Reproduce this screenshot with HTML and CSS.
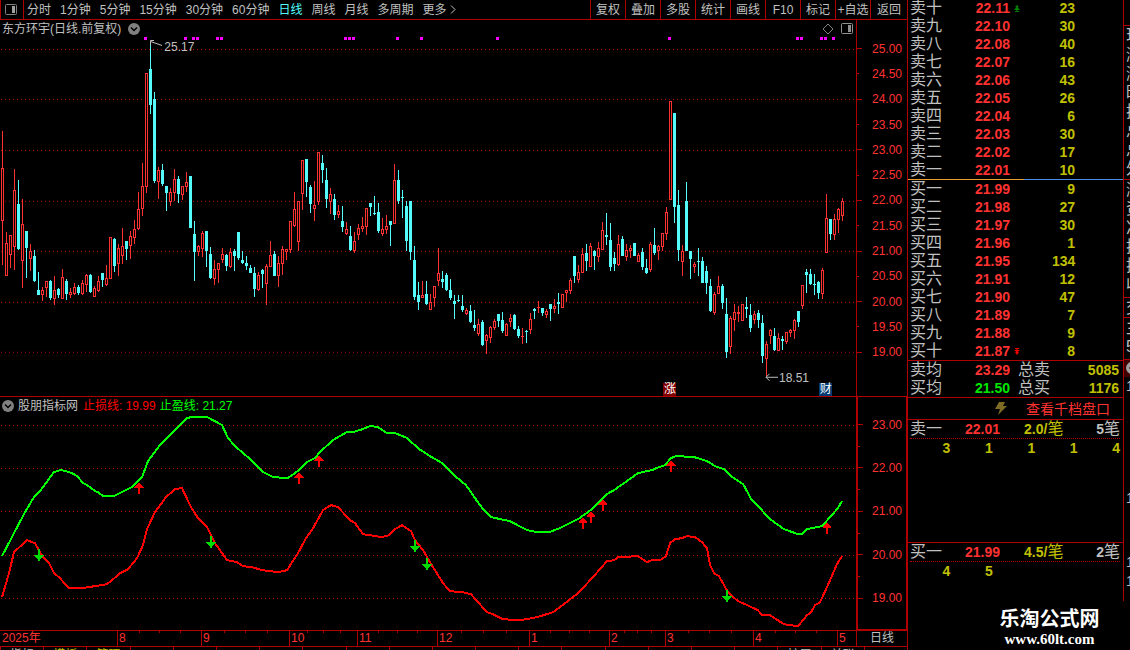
FILE: index.html
```
<!DOCTYPE html>
<html lang="zh-CN">
<head>
	<meta charset="utf-8">
	<title>东方环宇 日线</title>
	<link rel="stylesheet" href="styles.css">
</head>
<body>
	<main class="charts">
		<nav class="toolbar">
			<button class="tool-icon" aria-label="侧栏">
				<svg width="12" height="11" viewBox="0 0 12 11"><rect x=".5" y=".5" width="11" height="10" rx="1" fill="none" stroke="#808080"/><rect x="7" y="2" width="3" height="7" fill="#a0a0a0"/></svg>
			</button>
			<div class="periods">
				<button>分时</button>
				<button>1分钟</button>
				<button>5分钟</button>
				<button>15分钟</button>
				<button>30分钟</button>
				<button>60分钟</button>
				<button class="active">日线</button>
				<button>周线</button>
				<button>月线</button>
				<button>多周期</button>
				<button>更多 <svg width="6" height="9" viewBox="0 0 6 9"><path d="M1 0.5 5 4.5 1 8.5" fill="none" stroke="#c0c0c0"/></svg></button>
			</div>
			<div class="tools">
				<button>复权</button>
				<button>叠加</button>
				<button>多股</button>
				<button>统计</button>
				<button>画线</button>
				<button>F10</button>
				<button>标记</button>
				<button>+自选</button>
				<button>返回</button>
			</div>
		</nav>

		<section class="panel kline">
			<div class="plot">
				<svg id="kline" class="drawing" viewBox="0 20 856 376" preserveAspectRatio="none"></svg>
				<header class="plot-title">
					<span class="stock">东方环宇(日线.前复权)</span>
					<svg width="12" height="12" viewBox="0 0 12 12"><circle cx="6" cy="6" r="6" fill="#808080"/><path d="M3 4.5 6 7.5 9 4.5" fill="none" stroke="#000" stroke-width="1.5"/></svg>
					<span class="corner">
						<svg width="12" height="12" viewBox="0 0 12 12"><path d="M6 1 11 6 6 11 1 6Z" fill="none" stroke="#808080"/></svg>
						<svg width="12" height="11" viewBox="0 0 12 11"><rect x=".5" y=".5" width="11" height="10" rx="1" fill="none" stroke="#909090"/><rect x="7" y="2" width="3" height="7" fill="#909090"/></svg>
					</span>
				</header>
				<span class="note high">25.17</span>
				<span class="note low">18.51</span>
				<span class="flag rise">涨</span>
				<span class="flag report">财</span>
			</div>
			<ul class="scale">
				<li>25.00</li><li>24.50</li><li>24.00</li><li>23.50</li><li>23.00</li><li>22.50</li><li>22.00</li><li>21.50</li><li>21.00</li><li>20.50</li><li>20.00</li><li>19.50</li><li>19.00</li>
			</ul>
		</section>

		<section class="panel indicator">
			<div class="plot">
				<svg id="indicator" class="drawing" viewBox="0 397 856 233" preserveAspectRatio="none"></svg>
				<header class="plot-title">
					<svg width="12" height="12" viewBox="0 0 12 12"><circle cx="6" cy="6" r="6" fill="#808080"/><path d="M3 4.5 6 7.5 9 4.5" fill="none" stroke="#000" stroke-width="1.5"/></svg>
					<span>股朋指标网</span>
					<span class="stop">止损线: 19.99</span>
					<span class="profit">止盈线: 21.27</span>
				</header>
			</div>
			<ul class="scale">
				<li>23.00</li><li></li><li>22.00</li><li></li><li>21.00</li><li></li><li>20.00</li><li></li><li>19.00</li>
			</ul>
		</section>

		<div class="timeline">
			<ol class="months">
				<li>2025年</li><li>8</li><li>9</li><li>10</li><li>11</li><li>12</li><li>1</li><li>2</li><li>3</li><li>4</li><li>5</li>
			</ol>
			<span class="cycle">日线</span>
		</div>
		<nav class="tabs">
			<button>指标</button><button class="on">模板</button><button class="on">管理</button><button></button><button></button><button></button><button></button><button></button><button></button><button></button><button></button><button></button><button></button><button></button><button></button><button></button><button></button><button></button><button>扩展</button><button>关联</button><button></button>
		</nav>
	</main>

	<aside class="quote">
		<table class="book sells">
			<tr><th>卖十</th><td>22.11</td><td class="dir"><svg width="6" height="7" viewBox="0 0 6 7"><path d="M3 0 5 2H3.5L6 5H3.5V6H5V7H1V6H2.5V5H0L2.5 2H1Z" fill="#008000"/></svg></td><td>23</td></tr>
			<tr><th>卖九</th><td>22.10</td><td></td><td>30</td></tr>
			<tr><th>卖八</th><td>22.08</td><td></td><td>40</td></tr>
			<tr><th>卖七</th><td>22.07</td><td></td><td>16</td></tr>
			<tr><th>卖六</th><td>22.06</td><td></td><td>43</td></tr>
			<tr><th>卖五</th><td>22.05</td><td></td><td>26</td></tr>
			<tr><th>卖四</th><td>22.04</td><td></td><td>6</td></tr>
			<tr><th>卖三</th><td>22.03</td><td></td><td>30</td></tr>
			<tr><th>卖二</th><td>22.02</td><td></td><td>17</td></tr>
			<tr><th>卖一</th><td>22.01</td><td></td><td>10</td></tr>
		</table>
		<div class="ratio"></div>
		<table class="book">
			<tr><th>买一</th><td>21.99</td><td></td><td>9</td></tr>
			<tr><th>买二</th><td>21.98</td><td></td><td>27</td></tr>
			<tr><th>买三</th><td>21.97</td><td></td><td>30</td></tr>
			<tr><th>买四</th><td>21.96</td><td></td><td>1</td></tr>
			<tr><th>买五</th><td>21.95</td><td></td><td>134</td></tr>
			<tr><th>买六</th><td>21.91</td><td></td><td>12</td></tr>
			<tr><th>买七</th><td>21.90</td><td></td><td>47</td></tr>
			<tr><th>买八</th><td>21.89</td><td></td><td>7</td></tr>
			<tr><th>买九</th><td>21.88</td><td></td><td>9</td></tr>
			<tr><th>买十</th><td>21.87</td><td class="dir"><svg width="6" height="7" viewBox="0 0 6 7"><path d="M1 0H5V1H3.5V2H6L3.5 4H5L3 7 1 4H2.5L0 2H2.5V1H1Z" fill="#ff0000"/></svg></td><td>8</td></tr>
		</table>
		<table class="average">
			<tr><th>卖均</th><td>23.29</td><th>总卖</th><td>5085</td></tr>
			<tr><th>买均</th><td class="down">21.50</td><th>总买</th><td>1176</td></tr>
		</table>
		<a class="more" href="#">
			<svg width="12" height="13" viewBox="0 0 12 13"><path d="M4 0H10L8 4H12L3 13 5 7H0Z" fill="#7d6b24"/></svg>
			查看千档盘口
		</a>
		<section class="queue">
			<div class="queue-head"><span>卖一</span><b class="price">22.01</b><span class="each"><b>2.0/</b>笔</span><span class="count"><b>5</b>笔</span></div>
			<ul><li>3</li><li>1</li><li>1</li><li>1</li><li>4</li></ul>
		</section>
		<section class="queue">
			<div class="queue-head"><span>买一</span><b class="price">21.99</b><span class="each"><b>4.5/</b>笔</span><span class="count"><b>2</b>笔</span></div>
			<ul><li>4</li><li>5</li></ul>
		</section>
		<footer class="brand">
			<strong>乐淘公式网</strong>
			<span>www.60lt.com</span>
		</footer>
	</aside>

	<aside class="details">
		<div class="group blank"></div>
		<div class="group prices"><p>现</p><p>涨</p><p>涨</p><p>昨</p><p>换</p><p>总</p><p>总</p><p>外</p></div>
		<div class="group limits"><p>涨</p><p>资</p><p>净</p><p>换</p><p>换</p><p>收</p></div>
		<div class="group"><p>交</p></div>
		<div class="group money"><p>主</p><p>5</p></div>
		<div class="knob"><svg width="12" height="12" viewBox="0 0 12 12"><circle cx="6" cy="6" r="6" fill="#a0a0a0"/><path d="M7 3 4 6 7 9" fill="none" stroke="#400000" stroke-width="1.5"/></svg></div>
		<div class="ticks"><p>1</p><p>1</p><p>1</p><p>1</p></div>
	</aside>
	<script src="chart.js"></script>
</body>
</html>
```
FILE: styles.css
```
* {
	box-sizing: border-box;
}
body {
	margin: 0;
	display: flex;
	height: 100vh;
	min-height: 650px;
	overflow: hidden;
	background: #000;
	color: #c0c0c0;
	font: 12px/16px "Liberation Sans", "Noto Sans CJK SC", sans-serif;
}
ul, ol, p {
	margin: 0;
	padding: 0;
	list-style: none;
}
button {
	margin: 0;
	padding: 0;
	border: 0;
	background: none;
	color: inherit;
	font: inherit;
	white-space: nowrap;
}
svg {
	display: block;
}

/* left side */
.charts {
	flex: 1;
	min-width: 0;
	display: flex;
	flex-direction: column;
}
.toolbar {
	display: flex;
	height: 20px;
	border-bottom: 1px solid #b00000;
}
.tool-icon {
	width: 24px;
	padding-left: 4px;
	border: solid #b00000;
	border-width: 0 1px;
}
.periods {
	display: flex;
	gap: 9px;
	padding-left: 3px;
}
.periods svg {
	display: inline;
}
.periods .active {
	color: #54fcfc;
}
.tools {
	display: flex;
	margin-left: auto;
}
.tools button {
	width: 35px;
	border-left: 1px solid #b00000;
}
.tools button:last-child {
	width: 37px;
}

.panel {
	display: flex;
	min-height: 0;
}
.kline {
	flex: 377;
	border-bottom: 1px solid #b00000;
}
.indicator {
	flex: 234;
	border-bottom: 1px solid #b00000;
}
.plot {
	position: relative;
	flex: 1;
	min-width: 0;
}
.drawing {
	position: absolute;
	width: 100%;
	height: 100%;
	shape-rendering: crispEdges;
}
.plot-title {
	position: absolute;
	left: 2px;
	right: 3px;
	top: 0;
	display: flex;
	align-items: center;
	gap: 4px;
	height: 18px;
}
.stock {
	margin-right: 3px;
}
.corner {
	display: flex;
	gap: 7px;
	margin-left: auto;
}
.stop {
	color: #ff0000;
	margin-left: 1px;
}
.profit {
	color: #00ff00;
}
.note {
	position: absolute;
}
.high {
	left: 19.2%;
	top: 5%;
}
.low {
	left: 91%;
	top: 93.2%;
}
.flag {
	position: absolute;
	bottom: 0;
	width: 13px;
	height: 13px;
	color: #fff;
	line-height: 13px;
	text-align: center;
}
.rise {
	left: 77.5%;
	background: #800000;
}
.report {
	left: 95.7%;
	background: #003a70;
}

.scale {
	display: flex;
	flex-direction: column;
	width: 51px;
	border-left: 1px solid #b00000;
	color: #ff3232;
}
.scale li {
	flex: 1;
	display: flex;
	align-items: center;
	justify-content: space-between;
	padding-right: 5px;
}
.scale li::before {
	content: "";
	width: 5px;
	height: 1px;
	background: #b00000;
}
.scale li:nth-child(even)::before {
	width: 2px;
}
.kline .scale {
	padding: 16px 0 31px;
}
.indicator .scale {
	padding: 17px 0 20px;
	border: solid #b00000;
	border-width: 0 1px 1px 2px;
}
.indicator .scale li {
	padding-right: 4px;
}

.timeline {
	display: flex;
	height: 16px;
	border-bottom: 1px solid #b00000;
}
.months {
	flex: 1;
	display: grid;
	grid-template-columns: 117fr 84fr 88fr 68fr 80fr 92fr 80fr 56fr 88fr 84fr 19fr;
	color: #ff3232;
}
.months li {
	min-width: 0;
	padding-left: 1px;
	line-height: 15px;
	border-left: 1px solid #b00000;
	background: linear-gradient(#b00000, #b00000) 25% 0 / 1px 2px no-repeat,
		linear-gradient(#b00000, #b00000) 50% 0 / 1px 2px no-repeat,
		linear-gradient(#b00000, #b00000) 75% 0 / 1px 2px no-repeat;
}
.months li:first-child {
	border: 0;
	padding-left: 2px;
}
.months li:first-child, .months li:last-child {
	background: none;
}
.cycle {
	width: 51px;
	line-height: 15px;
	text-align: center;
	border-left: 1px solid #b00000;
}
.tabs {
	display: flex;
	height: 3px;
	overflow: hidden;
}
.tabs button {
	flex: 1;
	border-left: 1px solid #b00000;
	line-height: 16px;
	height: 16px;
}
.tabs .on {
	color: #c0c000;
}

/* order book */
.quote {
	display: flex;
	flex-direction: column;
	width: 216px;
	border-left: 1px solid #b00000;
	font-size: 16px;
	line-height: 18px;
}
table {
	width: 100%;
	table-layout: fixed;
	border-collapse: collapse;
}
tr {
	height: 18px;
}
th {
	padding: 0 0 0 2px;
	font-weight: normal;
	text-align: left;
}
td {
	padding: 0;
	color: #ff3232;
	font-size: 14px;
	font-weight: bold;
	text-align: right;
}
td:last-child, .queue li {
	color: #c0c000;
}
.book th {
	width: 60px;
}
.book td {
	width: 42px;
}
.book .dir {
	padding-left: 4px;
}
.book td:last-child {
	width: auto;
	padding-right: 48px;
}
.sells {
	margin-top: -1px;
}
.ratio {
	height: 1px;
	background: linear-gradient(90deg, #e8a030 54%, #4a90e8 54%);
}
.average {
	border: solid #b00000;
	border-width: 1px 0;
	border-collapse: separate;
	border-spacing: 0;
}
.average th:first-child {
	width: 60px;
}
.average td:nth-child(2) {
	width: 42px;
}
.average th:nth-child(3) {
	padding-left: 8px;
}
.average td:last-child {
	width: 50px;
	padding-right: 4px;
}
.average .down {
	color: #00e600;
}
.more {
	display: flex;
	align-items: center;
	justify-content: flex-end;
	gap: 19px;
	height: 22px;
	padding-right: 13px;
	border-bottom: 1px solid #b00000;
	color: #ff3232;
	font-size: 14px;
	text-decoration: none;
}
.queue {
	height: 123px;
	border-bottom: 1px solid #b00000;
}
.queue:last-of-type {
	height: 60px;
	border: 0;
}
.queue-head {
	display: flex;
	align-items: center;
	height: 19px;
	margin: 0 3px 0 2px;
	border-bottom: 1px dotted #b00000;
}
.queue b {
	font-size: 14px;
	font-weight: bold;
}
.price {
	margin-left: 23px;
	color: #ff3232;
}
.each {
	margin-left: 24px;
	color: #c0c000;
}
.count {
	margin-left: auto;
}
.queue ul {
	display: grid;
	grid-template-columns: repeat(5, 1fr);
	padding-right: 3px;
	font-size: 14px;
	font-weight: bold;
	text-align: right;
}
.brand {
	display: flex;
	flex-direction: column;
	align-items: center;
	margin-top: auto;
	padding: 0 0 2px 68px;
	color: #fff;
}
.brand strong {
	font-size: 20px;
	line-height: 22px;
}
.brand span {
	font: bold 15px/18px "Liberation Serif", serif;
}

/* cut off column at the right edge */
.details {
	width: 7px;
	height: 601px;
	overflow: hidden;
	padding: 0;
	border-left: 1px solid #b00000;
	font-size: 16px;
	line-height: 19px;
}
.details p {
	padding-left: 2px;
	height: 19px;
}
.group {
	border-bottom: 1px solid #b00000;
}
.blank {
	height: 26px;
}
.prices {
	height: 154px;
}
.limits {
	height: 118px;
}
.money {
	height: 42px;
}
.knob {
	height: 17px;
	padding: 2px 0 0 2px;
	background: #400000;
}
.ticks {
	font-size: 14px;
}
.ticks p:nth-child(2) {
	margin-top: 93px;
}
.ticks p:nth-child(3) {
	margin-top: 45px;
}
```
FILE: chart.js
```
var RED = "#ff3232";
var CYAN = "#54fcfc";

// one entry per day: colour, high, open/close top, open/close bottom, low
var days = `r131,168,221,265 r232,243,276,276 r235,235,255,268 r169,190,247,270 c180,204,249,250 r199,224,261,288 c231,231,248,278 r244,251,259,271 c250,256,281,282 c272,290,295,295
r287,290,295,301 r281,281,288,297 c280,281,298,300 r276,290,299,305 c288,289,295,298 r269,277,299,299 c279,281,294,300 r288,292,295,298 r283,287,294,295 c285,287,293,295
r280,283,294,295 r274,275,285,292 c274,275,292,293 r286,288,297,297 r276,281,291,292 c273,273,280,287 r265,278,285,286 r237,237,279,279 c238,239,266,272 r244,248,264,276
r228,246,256,264 c241,241,249,260 r231,236,246,259 r220,229,238,244 r192,209,229,230 r163,186,209,216 r73,73,187,193 c41,69,105,114 c92,99,181,183 r167,170,182,199
c164,170,184,186 c186,186,193,211 r188,192,202,206 r169,179,193,201 c176,179,194,203 r186,186,195,200 r172,182,187,192 c176,176,228,228 c221,234,252,281 r245,246,252,256
r231,233,249,257 c231,231,251,267 c247,254,278,279 r260,269,279,285 r263,263,270,283 r248,254,260,263 c254,255,266,271 r248,252,267,268 c249,251,256,271 c232,232,258,260
c251,260,263,264 c256,263,266,270 c265,268,273,273 c267,273,289,297 r272,275,290,291 c269,270,274,288 r264,266,284,305 r241,255,267,267 c251,254,276,276 r256,263,276,287
r246,249,264,275 r249,249,252,260 r221,221,250,253 r192,209,226,227 r201,201,242,251 r160,160,194,210 c159,159,182,197 c185,187,204,213 r181,205,209,221 r152,152,202,205
c155,163,170,183 c168,180,199,208 r188,194,202,214 c194,199,215,220 r205,211,215,218 c206,221,227,232 r222,229,234,235 c226,236,250,251 r232,241,251,253 r224,228,235,240
r217,226,229,232 r208,208,227,235 c203,203,207,216 c196,213,214,215 c203,212,231,233 r218,229,234,236 r215,226,230,234 c221,221,225,246 r164,180,224,224 c170,180,201,204
c190,197,198,218 c201,206,241,251 c201,201,252,260 c246,260,297,300 c282,295,302,310 r281,295,298,298 c281,294,304,305 r294,302,310,310 r286,286,298,307 r248,273,281,286
c271,279,282,288 c273,275,290,291 c279,290,298,300 c295,301,304,319 c295,300,301,302 c295,306,310,312 r308,310,314,315 c305,311,322,323 c310,325,328,331 r319,324,334,336
c320,322,345,346 r334,335,341,354 r326,327,338,343 r319,321,328,330 c314,314,321,327 c312,320,331,333 r323,324,336,336 r314,318,322,327 c314,315,329,330 c326,329,336,338
r328,336,337,344 c330,331,332,343 r313,319,330,334 c308,309,311,319 r301,307,308,313 c308,308,313,316 r309,311,315,318 c304,304,309,321 r299,306,309,313 c293,302,304,314
r294,294,308,308 r290,290,293,302 r278,280,291,294 c256,256,276,283 r265,272,280,283 r248,254,273,273 c244,253,261,271 r243,246,267,267 c250,251,256,270 r242,248,257,262
r222,230,250,250 c213,235,237,245 c223,240,267,271 c252,258,264,271 r235,244,265,266 c236,239,256,256 r244,250,257,261 r245,248,251,258 c243,243,256,256 r253,255,262,262
c248,252,267,270 c259,268,273,274 r242,244,270,272 c228,245,253,255 r245,246,251,260 r233,233,247,251 r207,212,234,240 r101,101,200,200 c113,113,207,223 c190,205,250,261
r245,251,262,276 c182,201,251,251 c251,251,259,279 r262,264,267,273 c248,261,262,276 c257,261,283,283 c266,271,283,294 c279,286,311,312 r292,294,313,315 r276,286,294,294
c284,286,303,309 c298,314,352,358 r316,318,347,354 r304,312,320,331 r306,312,314,322 r304,304,321,321 c297,307,309,318 c304,315,328,332 r311,314,320,324 c310,313,320,328
c315,323,356,363 r341,344,359,376 r329,330,336,344 c328,336,350,351 r333,338,351,351 c336,339,341,350 r332,332,342,344 r329,330,333,337 r319,320,331,339 c311,311,322,327
r285,285,306,309 c269,272,275,293 c269,274,284,285 c274,284,285,295 c281,282,293,299 r268,270,294,299 r194,218,253,253 c219,219,234,240 r214,219,235,240 r208,209,220,233
r198,201,216,221`.split(/\s+/);

var profitLine = "2,556 14,533 25,512 34,497 40,491 54,472 60,470 66,471 74,474 78,477 83,483 87,485 95,491 98,492 103,496 114,496 132,487 142,477 148,461 160,445 172,433 187,418 192,417 207,417 222,425 228,438 235,446 250,459 263,472 273,477 288,478 299,470 307,462 315,458 320,452 333,440 347,432 353,432 363,429 370,426 378,427 387,433 395,433 407,438 419,449 430,456 442,463 455,476 466,485 475,498 483,509 491,517 510,521 527,530 537,532 549,532 560,528 578,519 592,509 607,494 614,490 627,481 638,473 652,470 659,467 665,465 671,458 676,456 694,457 707,461 715,466 724,469 731,476 743,484 747,491 751,499 759,507 770,519 784,529 798,534 802,534 807,529 822,526 838,508 842,501";
var stopLine = "2,597 9,573 14,552 27,540 35,543 43,557 49,563 54,573 59,577 69,588 82,588 107,584 112,580 120,573 128,569 137,558 143,545 147,529 155,512 166,497 175,489 182,488 191,507 198,518 207,527 215,543 227,560 237,562 243,566 252,567 262,570 278,572 287,570 298,553 306,538 312,530 323,510 331,505 338,507 350,520 355,523 363,534 382,537 389,535 395,529 402,525 411,531 415,540 423,550 430,562 443,583 450,591 463,592 471,594 487,612 493,614 503,619 520,620 537,617 553,612 565,603 578,593 592,578 607,561 614,560 618,557 638,556 647,562 652,560 660,560 666,556 670,543 675,539 682,538 687,536 695,537 702,542 707,548 710,565 714,573 719,576 728,592 738,601 743,603 758,610 762,615 770,615 784,624 798,626 807,615 811,612 815,605 820,602 827,587 837,564 842,556";

function rect(x, y, w, h, fill) {
	return `<rect x="${x}" y="${y}" width="${w}" height="${h}" fill="${fill}"/>`;
}
function gridLine(y) {
	return `<path d="M1 ${y + 0.5}H856" stroke="#b00000" stroke-dasharray="1 3"/>`;
}

function drawKline() {
	var out = [49, 99, 150, 201, 251, 302, 352].map(gridLine).join("");
	days.forEach(function (d, i) {
		var c = d[0] == "r" ? RED : CYAN;
		var v = d.slice(1).split(",").map(Number);
		var x = 1 + 4 * i;
		var h = Math.max(v[2] - v[1], 1);
		out += rect(x + 1, v[0], 1, v[3] - v[0], c);
		out += rect(x, v[1], 3, h, c);
		if (c == RED && h > 2) out += rect(x + 1, v[1] + 1, 1, h - 2, "#000");
	});
	// event dots
	[145, 185, 193, 197, 217, 221, 345, 349, 353, 397, 421, 497, 669, 797, 801, 821, 825, 833].forEach(function (x) {
		out += rect(x - 1, 37, 3, 3, "#ff00ff");
	});
	out += '<path d="M150.5 41.5 162 45.5M154 40.5H150.5V45M766 377.5H778M769.5 374 766 377.5 769.5 381" fill="none" stroke="#c0c0c0"/>';
	document.getElementById("kline").innerHTML = out;
}

function drawIndicator() {
	var out = [425, 468, 511, 555, 598].map(gridLine).join("");
	out += `<polyline points="${profitLine}" fill="none" stroke="#00ff00" stroke-width="2"/>`;
	out += `<polyline points="${stopLine}" fill="none" stroke="#ff0000" stroke-width="2"/>`;
	[[139, 482], [299, 472], [319, 455], [583, 517], [591, 511], [603, 499], [671, 460], [827, 522]].forEach(function (p) {
		out += `<path d="M${p[0]} ${p[1]}l5 6h-4v6h-2v-6h-4z" fill="#ff0000"/>`;
	});
	[[39, 561], [211, 548], [415, 552], [427, 570], [727, 602]].forEach(function (p) {
		out += `<path d="M${p[0]} ${p[1]}l5 -6h-4v-6h-2v6h-4z" fill="#00dc00"/>`;
	});
	document.getElementById("indicator").innerHTML = out;
}

drawKline();
drawIndicator();
```
